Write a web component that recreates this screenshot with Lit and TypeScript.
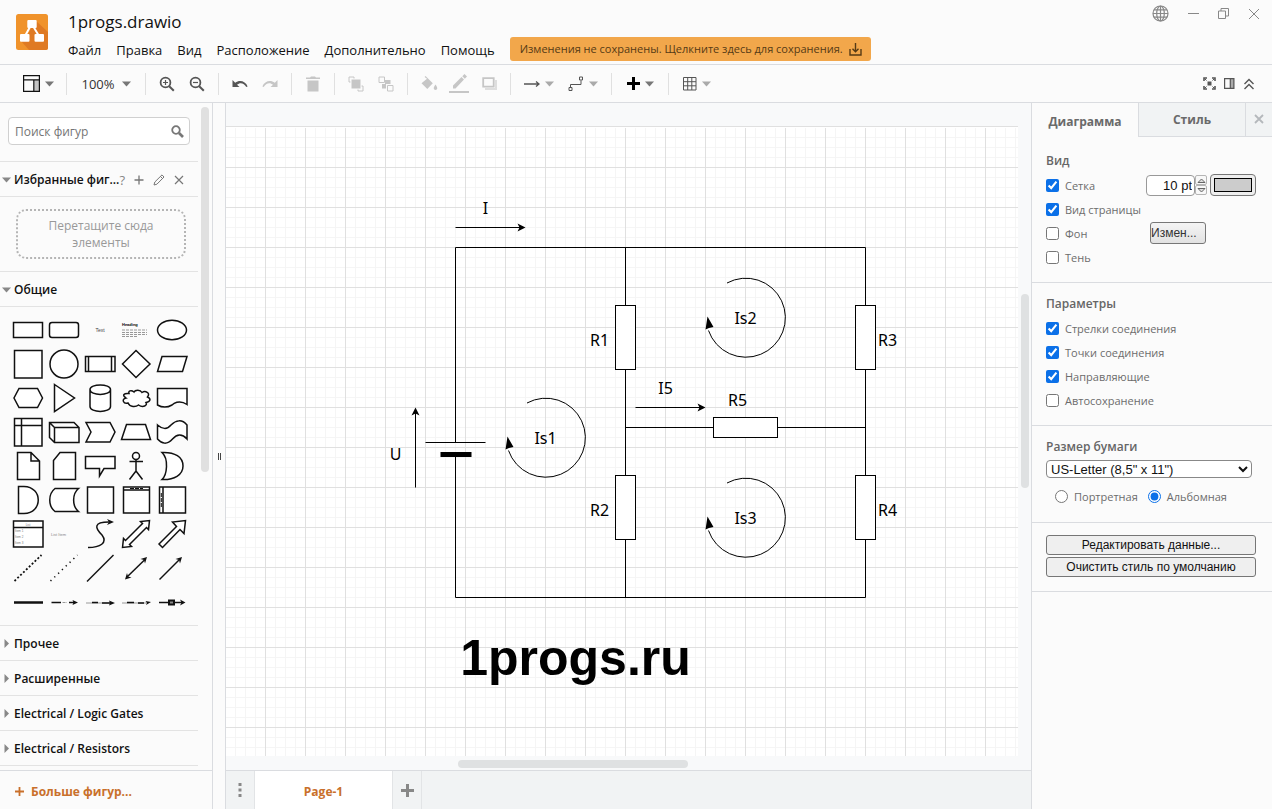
import { LitElement, html, css, svg } from "lit";
import { customElement, state } from "lit/decorators.js";
import { classMap } from "lit/directives/class-map.js";

const PALETTE = [
  svg`<rect x="3.5" y="9.5" width="29" height="15"/>`,
  svg`<rect x="3.5" y="9.5" width="29" height="15" rx="2.5"/>`,
  svg`<text x="18" y="19" class="tiny" text-anchor="middle">Text</text>`,
  svg`<text x="4" y="13" class="tiny heading">Heading</text><path class="faint" d="M4 17H29M4 19.500H29M4 21.500H29M4 23.500H19"/>`,
  svg`<ellipse cx="18" cy="17" rx="14.500" ry="9.800"/>`,

  svg`<rect x="4.500" y="3.500" width="27.500" height="27.500"/>`,
  svg`<circle cx="18" cy="17" r="14"/>`,
  svg`<rect x="3.500" y="9.500" width="29.500" height="15"/><path d="M6.500 9.500v15M29.500 9.500v15"/>`,
  svg`<path d="M18 3.500 32 17 18 30.500 4.500 17Z"/>`,
  svg`<path d="M8 9.500H33L28.500 24.500H3.500Z"/>`,

  svg`<path d="M9 7.500H27.500L32.500 17 27.500 26.500H9L4 17Z"/>`,
  svg`<path d="M8.500 3.500 28.500 17 8.500 30.500Z"/>`,
  svg`<path d="M8 8.500V25.500C8 32 28.500 32 28.500 25.500V8.500C28.500 2.500 8 2.500 8 8.500C8 15 28.500 15 28.500 8.500"/>`,
  svg`<path d="M11 12.500C6 12 3.500 14 8 17C3 18 5.500 23.500 10 22C12 26.500 18 26 20.500 24C25 27 30 24.500 28 21.500C33 20.500 33 17.500 29.500 16C33 11.500 27 9.500 24 11.500C22 8 17 9 16 11C13 8.500 10 10 11 12.500Z"/>`,
  svg`<path d="M3.500 7.500H33V23.500C25 18 19 23 18 24C12 27.500 7 26 3.500 24Z"/>`,

  svg`<path d="M4.500 3.500H32V31H4.500ZM4.500 10.500H32M11.500 3.500V31"/>`,
  svg`<path d="M3.500 7.500H28L33 12.500V27.500H8.500L3.500 22.500ZM3.500 7.500 8.500 12.500H33M8.500 12.500V27.500"/>`,
  svg`<path d="M4 7.500H28L33 17 28 27H4L9 17Z"/>`,
  svg`<path d="M8.500 9.500H27.500L32.500 24.500H3.500Z"/>`,
  svg`<path d="M3.500 10C8 14 13 15 17 10C22 5 28 4 33 10V24C28 18.500 23 19 18.500 24C13 30 8 29 3.500 24Z"/>`,

  svg`<path d="M7.500 3.500H21L29.500 12V30.500H7.500ZM21 3.500V12H29.500"/>`,
  svg`<path d="M14 3.500H29.500V30.500H7.500V11.500Z"/>`,
  svg`<path d="M3.500 7.500H33V19.500H22L17.500 27V19.500H3.500Z"/>`,
  svg`<circle cx="18" cy="7" r="3.500"/><path d="M18 10.500V22M11.500 12.500H25M18 22 11.500 30.500M18 22 24.500 30.500"/>`,
  svg`<path d="M8 3.500C21 3 29 8 29 17C29 26 20 31 8 30.500C13 26 15 10 8 3.500Z"/>`,

  svg`<path d="M8.500 3.500H14C33 4 33 30 14 30.500H8.500Z"/>`,
  svg`<path d="M9 5.500H32.500C26 11 26 23 32.500 28.500H9C2 23 2 11 9 5.500Z"/>`,
  svg`<rect x="5.500" y="4" width="26" height="26"/>`,
  svg`<path d="M5.500 4H31.500V30H5.500ZM5.500 7H31.500"/><path class="dash" d="M12 5.500H25"/>`,
  svg`<path d="M5.500 4H31.500V30H5.500ZM9 4V30"/><path class="dash" d="M7.300 10V24"/>`,

  svg`<path d="M3.500 4H33V30H3.500ZM3.500 10.500H33"/><text class="micro" x="18" y="9" text-anchor="middle">List</text><text class="micro" x="5" y="15">Item 1</text><text class="micro" x="5" y="21">Item 2</text><text class="micro" x="5" y="27">Item 3</text>`,
  svg`<text class="micro soft" x="5" y="18.500">List Item</text>`,
  svg`<path class="open" d="M6 30.500C18 30.500 26 26 20 18C13 11 11 5 27 5"/><path class="solid" d="M32 5 25 2 27 5 25 8Z"/>`,
  svg`<path d="M4.500 30.500 5.500 21.500 7.500 23.500 24.500 6.500 22.500 4.500 31.500 3.500 30.500 12.500 28.500 10.500 11.500 27.500 13.500 29.500Z"/>`,
  svg`<path d="M5 27 22.500 9.500 18.500 5 31.500 3.500 30 16.500 26 12.500 8.500 30.500Z"/>`,

  svg`<path class="dotted" d="M4.500 30 31.500 4"/>`,
  svg`<path class="sparse" d="M4.500 30 31.500 4"/>`,
  svg`<path d="M5 30.500 31.500 4"/>`,
  svg`<path d="M9 26 27 8.500"/><path class="solid" d="M7 28.500 9 22 10 25.500 13.500 26.500ZM29 6 27 12.500 26 9 22.500 8Z"/>`,
  svg`<path d="M5.500 28.500 25 9"/><path class="solid" d="M28 6 26 12.500 25 9 21.500 8Z"/>`,

  svg`<path class="heavy" d="M4 17.500H33"/>`,
  svg`<path d="M5.500 17.500H15M23 17.500H28"/><path class="faint" d="M16.500 17.500H21"/><path class="solid" d="M32 17.500 26.500 15 27.500 17.500 26.500 20Z"/>`,
  svg`<path class="faint even" d="M4 18H28"/><path d="M10 17.500H16M20 18H28"/><path class="solid" d="M33 18 27 15.500 28 18 27 20.500Z"/>`,
  svg`<path class="faint even" d="M4 18H30"/><path d="M9 17.500H16M20 18H26"/><path class="solid" d="M33 17 27.500 16 29 18 28 20Z"/>`,
  svg`<path d="M5 17.500H28"/><rect class="heavybox" x="15" y="15.500" width="5" height="4"/><path class="solid" d="M31.500 17.500 26 14.500 27.500 17.500 26 20.500Z"/>`,
];

const icon = (w: number, h: number, body: unknown, cls = "") => html`<svg
  class="icon ${cls}" width=${w} height=${h} viewBox="0 0 ${w} ${h}" aria-hidden="true">${body}</svg>`;
const caret = (cls = "") => icon(9, 6, svg`<path d="M0 0.500H9L4.500 5.500Z"/>`, "fill " + cls);

const I = {
  layout: icon(17, 17, svg`<path fill="#c4c4c4" stroke="none" d="M11 5h5v11h-5z"/><path stroke="#111" stroke-width="1.200" d="M.6.6h15.800v15.800H.6zM.6 4.800h15.800M10.800 4.800v11.600"/>`),
  zoomIn: icon(16, 16, svg`<circle cx="6.500" cy="6.500" r="4.900" stroke-width="1.800"/><path stroke-width="2" d="M10.200 10.200 14.800 14.800"/><path stroke-width="1.200" d="M4 6.500h5M6.500 4v5"/>`),
  zoomOut: icon(16, 16, svg`<circle cx="6.500" cy="6.500" r="4.900" stroke-width="1.800"/><path stroke-width="2" d="M10.200 10.200 14.800 14.800"/><path stroke-width="1.200" d="M4 6.500h5"/>`),
  undo: icon(16, 10, svg`<path d="M.5 1v7h7L5 5.700C8 3 12 3.800 14.300 8l1.300-.5C13.500 2 7.500.5 3.200 3.800Z"/>`, "fill"),
  redo: icon(16, 10, svg`<path d="M15.500 1v7h-7L11 5.700C8 3 4 3.800 1.700 8L.4 7.500C2.500 2 8.500.5 12.800 3.800Z"/>`, "fill"),
  trash: icon(14, 16, svg`<path d="M0 1.500h4L5 .5h4l1 1h4V3H0zM1.500 4.500h11v11h-11z"/>`, "fill"),
  front: icon(16, 16, svg`<path fill="currentColor" stroke="none" d="M3.500 3.500h9v9h-9z"/><path d="M2.500 6H1V1h5v1.500M13.500 10H15v5h-5v-1.500"/>`),
  back: icon(16, 16, svg`<path fill="currentColor" stroke="none" d="M7 4h5.500v4H8v4.500H4V8h3z"/><path d="M1 1h5.500v5.500H1zM9.500 9.500H15V15H9.500z"/>`),
  fill: icon(17, 15, svg`<path d="M4.500 0 11.800 7.300 6.300 13 .5 7.200 6 2.800 3.600.9zM14.500 8.500c3 4 1.500 5.500 0 5.500s-3-1.500 0-5.500z"/>`, "fill"),
  line: icon(20, 19, svg`<path d="M0 17h20v2H0zM4 14.500v-3L12.500 3 15 5.500 6.500 14.500zM13.300 2.200 15.500 0 18 2.500 15.800 4.700z"/>`, "fill"),
  shadow: icon(15, 13, svg`<path stroke-width="1.800" d="M1.200 1.200h10.500v8.500H1.200z"/><path stroke-width="2" stroke="#dedede" d="M3 12h11V3"/>`),
  arrow: icon(16, 8, svg`<path stroke-width="1.300" d="M0 4h15M12 1.500 15 4 12 6.500"/>`),
  way: icon(16, 16, svg`<path d="M2.500 11V8.500h10.500V4.500"/><path d="M1 11.500h3v3H1zM11.500 1h3v3h-3z"/>`),
  plus: icon(13, 13, svg`<path stroke="#000" stroke-width="3" d="M6.500 0v13M0 6.500h13"/>`),
  grid: icon(14, 14, svg`<path d="M.5.5h12.500v12.500H.5zM4.700.5V13M8.800.5V13M.5 4.700H13M.5 8.800H13"/>`),
  full: icon(13, 13, svg`<path stroke-width="1.600" d="M1 4V1h3M9 1h3v3M12 9v3H9M4 12H1V9"/><path stroke-width="4" d="M4.500 6.500h4"/><path d="M2 2l1.500 1.500M11 2 9.500 3.500M2 11l1.500-1.500M11 11 9.500 9.500"/>`),
  format: icon(11, 11, svg`<path fill="#aaa" stroke="none" d="M6.500.500h3.500v10H6.500z"/><path stroke-width="1.200" d="M.6.6h9.300v9.800H.6zM6.300.600v9.800"/>`),
  collapse: icon(12, 12, svg`<path stroke-width="1.400" d="M1.500 6 6 1.500 10.500 6M1.500 11 6 6.500 10.500 11"/>`),
  globe: icon(17, 17, svg`<g stroke-width="1.200"><circle cx="8.500" cy="8.500" r="7.500"/><ellipse cx="8.500" cy="8.500" rx="3.800" ry="7.500"/><path d="M8.500 1v15M1 8.500h15M2 4.800h13M2 12.200h13"/></g>`),
  min: icon(11, 11, svg`<path d="M0 5.500h11"/>`),
  restore: icon(11, 11, svg`<path d="M.5 3h7v7.500h-7zM3 3V.500h7.500V8H7.500"/>`),
  close: icon(12, 12, svg`<path d="M1 1 11 11M11 1 1 11"/>`),
  save: icon(13, 13, svg`<path stroke-width="1.400" d="M1 6v6h11V6M6.500 0v8.500M3.500 5.800l3 3 3-3"/>`),
  search: icon(13, 13, svg`<circle cx="5" cy="5" r="3.800" stroke-width="1.800"/><path stroke-width="2.600" d="M8 8 12 12"/>`),
  add: icon(10, 10, svg`<path stroke-width="1.300" d="M5 .5v9M.5 5h9"/>`),
  pencil: icon(12, 12, svg`<path d="M1 11l.8-3L9 .900 11 3 3.900 10.200zM7.500 2.500l2 2"/>`),
  cross: icon(10, 10, svg`<path stroke-width="1.200" d="M1 1 9 9M9 1 1 9"/>`),
  shut: icon(10, 10, svg`<path stroke-width="1.800" d="M1 1 9 9M9 1 1 9"/>`),
  dots: icon(4, 14, svg`<path d="M.5 0h3v3h-3zM.5 5.500h3v3h-3zM.5 11h3v3h-3z"/>`, "fill"),
  addPage: icon(13, 13, svg`<path stroke-width="3" d="M6.500 0v13M0 6.500h13"/>`),
};

const LOGO = html`<svg class="logo" width="32" height="36" viewBox="0 0 32 36" role="img" aria-label="draw.io">
  <rect width="32" height="36" rx="2.500" fill="#f0932b"/>
  <path fill="#df7a23" d="M20 7 32 18V33.500Q32 36 29.500 36H13L5 27 12 20 15 14Z"/>
  <path stroke="#fff" stroke-width="2" d="M14.500 12 9 22M17 12 23 22"/>
  <rect x="11.300" y="6" width="9.400" height="8" rx="1" fill="#fff"/>
  <rect x="4" y="20" width="9.500" height="7.800" rx="1" fill="#fff"/>
  <rect x="18.500" y="20" width="9.500" height="7.800" rx="1" fill="#fff"/>
</svg>`;

const loop = (x: number, y: number, label: string) => svg`<g transform="translate(${x} ${y})">
  <path class="wire" d="M-18.500-34.500A39.500 39.500 0 1 1-37 13"/>
  <path d="M-38-1-40 12-36.500 10.500-32 9.500Z"/>
  <text x="0" y="6" text-anchor="middle">${label}</text></g>`;
const arrowRight = (x: number, y: number) => svg`<path class="wire" d="M${x} ${y}h66"/>
  <path d="M${x + 70} ${y}l-8-4 2 4-2 4z"/>`;
const resistor = (x: number, y: number, w: number, h: number) =>
  svg`<rect class="part" x=${x} y=${y} width=${w} height=${h}/>`;

@customElement("drawing-canvas")
export class DrawingCanvas extends LitElement {
  static styles = css`
    :host { display: grid; grid-template-columns: minmax(0, 1fr) 13px; grid-template-rows: minmax(0, 1fr) 14px; background: #f8f9fa; min-width: 0; min-height: 0; padding-top: 23px; border-left: 1px solid #dadce0; }
    .sheet { display: block; width: 100%; height: 100%; background: #fff; font: 16px "Noto Sans", sans-serif; overflow: hidden; }
    .wire { fill: none; stroke: #000; stroke-width: 1; }
    .part { fill: #fff; stroke: #000; }
    .plate { stroke-width: 5; }
    .minor { fill: none; stroke: #f5f5f5; }
    .major { fill: none; stroke: #e0e0e0; }
    .mark { font: bold 50px "Liberation Sans", sans-serif; }
    .vbar { display: flex; flex-direction: column; align-items: center; padding-top: 168px; }
    .hbar { display: flex; align-items: center; padding: 2px 0 0 232px; }
    .thumb { background: #dfe1e2; border-radius: 4px; }
    .vbar .thumb { width: 8px; height: 42%; }
    .hbar .thumb { height: 8px; width: 41%; }
  `;
  render() {
    return html`
      <svg class="sheet" role="img" aria-label="Электрическая схема">
        <defs>
          <pattern id="grid" width="40" height="40" patternUnits="userSpaceOnUse">
            <path class="minor" d="M10.500 0V40M20.500 0V40M30.500 0V40M0 10.500H40M0 20.500H40M0 30.500H40"/>
            <path class="major" d="M.5 0V40M0 .5H40"/>
          </pattern>
        </defs>
        <g transform="translate(-1 0)">
        <rect y="1" width="110%" height="100%" fill="url(#grid)" transform="translate(0 1)"/>
        <path class="major" d="M0 .5H2000"/>
        <g transform="translate(.5 1.500)">
          <path class="wire" d="M230 315V120H640V470H230V327M400 120V470M400 300H640M200 315H260"/>
          <path class="wire plate" d="M215 327H246"/>
          ${resistor(390, 178, 20, 64)}${resistor(390, 348, 20, 64)}
          ${resistor(630, 178, 20, 64)}${resistor(630, 348, 20, 64)}
          ${resistor(488, 290, 64, 20)}
          ${arrowRight(230, 100)}${arrowRight(410, 280)}
          <path class="wire" d="M190 360V284"/><path d="M190 280l-4 8 4-2 4 2z"/>
          ${loop(320, 310, "Is1")}${loop(520, 190, "Is2")}${loop(520, 390, "Is3")}
          <text x="260" y="86" text-anchor="middle">I</text>
          <text x="440" y="266" text-anchor="middle">I5</text>
          <text x="170" y="332" text-anchor="middle">U</text>
          <text x="374" y="218" text-anchor="middle">R1</text>
          <text x="374" y="388" text-anchor="middle">R2</text>
          <text x="662" y="218" text-anchor="middle">R3</text>
          <text x="662" y="388" text-anchor="middle">R4</text>
          <text x="512" y="278" text-anchor="middle">R5</text>
          <text class="mark" x="350" y="547" text-anchor="middle">1progs.ru</text>
        </g>
        </g>
      </svg>
      <div class="vbar"><div class="thumb"></div></div>
      <div class="hbar"><div class="thumb"></div></div>`;
  }
}

@customElement("shape-sidebar")
export class ShapeSidebar extends LitElement {
  static styles = css`
    :host { display: flex; flex-direction: column; min-height: 0; border-right: 1px solid #dadce0; font: 500 13px/18px "Open Sans", sans-serif; color: #111; }
    button { font: inherit; color: inherit; background: none; border: 0; padding: 0; margin: 0; }
    .icon { display: block; flex: none; fill: none; stroke: currentColor; }
    .fill { fill: currentColor; stroke: none; }
    .scroll { display: flex; flex: 1; min-height: 0; overflow: hidden; }
    .list { width: 198px; }
    .track { flex: 1; padding: 4px 3px 0; }
    .thumb { background: #e0e0e0; border-radius: 4px; height: 55%; }
    .find { display: flex; align-items: center; margin: 14px 8px 16px; height: 26px; border: 1px solid #d0d0d0; border-radius: 4px; background: #fff; padding-right: 5px; color: #777; }
    .find input { flex: 1; min-width: 0; border: 0; background: none; outline: none; padding: 0 6px; font: 12px "Open Sans", sans-serif; color: #333; }
    .find input::placeholder { color: #757575; }
    .head { display: flex; align-items: center; border-top: 1px solid #e3e3e3; height: 34px; }
    .open .head { border-bottom: 1px solid #e3e3e3; }
    .list section:last-child { border-bottom: 1px solid #e3e3e3; }
    .title { display: flex; align-items: center; gap: 2px; font-size: 12px; font-weight: 600; white-space: nowrap; padding-top: 1px; }
    .mark { width: 12px; display: flex; justify-content: center; color: #888; }
    .tools { display: flex; align-items: center; gap: 9px; color: #777; padding-top: 1px; }
    .help { color: #888; }
    .drop { margin: 12px 12px 12px 16px; border: 2px dotted #b5b5b5; border-radius: 10px; padding: 6px 24px; text-align: center; font-size: 12px; line-height: 17px; font-weight: 400; color: #999; }
    .shapes { display: grid; grid-template-columns: repeat(5, 36px); padding: 6px 8px 6px 10px; }
    .shapes svg { display: block; fill: #fff; stroke: #111; stroke-width: 1.5; overflow: visible; }
    .shapes .tiny { font: 5px "Liberation Sans", sans-serif; fill: #444; stroke: none; }
    .shapes .heading { font-size: 4px; font-weight: bold; fill: #000; }
    .shapes .micro { font: 3px "Liberation Sans", sans-serif; fill: #777; stroke: none; }
    .shapes .soft { font-size: 4px; fill: #888; }
    .faint { stroke: #999; stroke-width: 1; stroke-dasharray: 3 1; }
    .even { stroke-dasharray: none; }
    .dash { stroke-width: 1; stroke-dasharray: 4 1; }
    .shapes .open { fill: none; }
    .solid { fill: #111; stroke: none; }
    .dotted { stroke-width: 1.8; stroke-dasharray: 2 2; }
    .sparse { stroke-width: 1.5; stroke-dasharray: 1.3 4; }
    .heavy { stroke-width: 2.5; }
    .heavybox { stroke-width: 2; fill: #888; }
    .more { height: 39px; border-top: 1px solid #dadce0; color: #c9702b; font-size: 12px; font-weight: 700; display: flex; align-items: center; gap: 7px; padding: 3px 15px 0; }
  `;
  render() {
    const section = (t: string) => html`<section><div class="head">
      <button class="title"><span class="mark">${icon(5, 9, svg`<path d="M.5 0V9L5 4.500Z"/>`, "fill")}</span>${t}</button></div></section>`;
    return html`
      <div class="scroll">
        <div class="list">
          <div class="find"><input type="text" aria-label="Поиск фигур" placeholder="Поиск фигур">${I.search}</div>
          <section class="open">
            <div class="head">
              <button class="title"><span class="mark">${caret()}</span>Избранные фиг...</button>
              <div class="tools"><button class="help" aria-label="Справка">?</button><button aria-label="Добавить">${I.add}</button>
              <button aria-label="Изменить">${I.pencil}</button><button aria-label="Закрыть">${I.cross}</button></div>
            </div>
            <div class="drop">Перетащите сюда элементы</div>
          </section>
          <section class="open">
            <div class="head"><button class="title"><span class="mark">${caret()}</span>Общие</button></div>
            <div class="shapes">${PALETTE.map((s) => html`<button tabindex="-1"><svg width="36" height="34" viewBox="0 0 36 34">${s}</svg></button>`)}</div>
          </section>
          ${["Прочее", "Расширенные", "Electrical / Logic Gates", "Electrical / Resistors"].map(section)}
        </div>
        <div class="track"><div class="thumb"></div></div>
      </div>
      <button class="more">${icon(9, 9, svg`<path stroke-width="1.800" d="M4.500 0v9M0 4.500h9"/>`)}Больше фигур...</button>`;
  }
}

@customElement("format-panel")
export class FormatPanel extends LitElement {
  @state() private portrait = false;
  static styles = css`
    :host { display: block; border-left: 1px solid #dadce0; font: 11px/18px "Open Sans", sans-serif; color: #6c6c6c; background: #fbfbfb; }
    button { font: inherit; color: inherit; margin: 0; padding: 0; }
    .icon { display: block; fill: none; stroke: currentColor; }
    .fill { fill: currentColor; stroke: none; }
    .tabs { display: grid; grid-template-columns: 106px 1fr 27px; height: 34px; }
    .tabs button { border: 1px solid #dadce0; border-width: 0 0 1px 1px; background: #f1f3f4; font-weight: 700; font-size: 12px; color: #6a6a6a; display: flex; align-items: center; justify-content: center; }
    .tabs .active { background: none; border: 0; padding-top: 3px; }
    .tabs .shut { color: #b4b8bc; padding-bottom: 2px; }
    .group { border-bottom: 1px solid #dadce0; padding: 15px 15px 13px 14px; }
    h2 { margin: 0 0 3px; font-size: 12px; line-height: 18px; font-weight: 600; color: #666; }
    .row { display: grid; grid-template-columns: 100px 1fr; align-items: center; height: 24px; }
    label { display: flex; align-items: center; gap: 6px; white-space: nowrap; }
    input[type="checkbox"], input[type="radio"] { width: 13px; height: 13px; margin: 0; flex: none; accent-color: #0b70e8; }
    label span { padding-top: 2px; }
    .size { display: flex; align-items: center; }
    .size input { width: 49px; height: 21px; box-sizing: border-box; border: 1px solid #999; border-radius: 4px; text-align: right; padding: 0 2px; font: 13px "Liberation Sans", sans-serif; color: #111; background: #fff; }
    .spin { display: grid; width: 12px; height: 20px; margin-right: 3px; }
    .spin button { background: #f8f8f8; border: 1px solid #b5b5b5; border-radius: 2px; display: grid; place-items: center; }
    .swatch { width: 46px; height: 22px; box-sizing: border-box; border: 1px solid #777; border-radius: 4px; background: #eee; padding: 3px; display: grid; }
    .swatch i { border: 1px solid #000; background: #ccc; }
    .change { justify-self: start; width: 56px; height: 22px; margin-left: 4px; border: 1px solid #777; border-radius: 3px; background: linear-gradient(#f4f4f4, #e2e2e2); font: 12px "Liberation Sans", sans-serif; color: #333; text-align: left; overflow: hidden; }
    select { display: block; width: 206px; height: 18px; border: 1px solid #888; border-radius: 4px; background: #fff; color: #111; font: 13px "Liberation Sans", sans-serif; padding: 0; }
    .radios { display: flex; gap: 10px; padding: 8px 9px 1px; }
    .paper { padding-top: 12px; padding-bottom: 15px; }
    .paper h2 { margin-bottom: 4px; }
    .actions { display: grid; gap: 2px; padding: 12px 16px 14px 14px; }
    .actions button { height: 20px; border: 1px solid #767676; border-radius: 3px; background: #efefef; color: #111; font: 12px "Liberation Sans", sans-serif; }
    .params { padding-top: 12px; }
  `;
  render() {
    const check = (t: string, on: boolean) => html`<label><input type="checkbox" .checked=${on}><span>${t}</span></label>`;
    const tri = (d: string) => icon(9, 5, svg`<path stroke="#666" fill="#ddd" d=${d}/>`);
    return html`
      <div class="tabs"><button class="active">Диаграмма</button><button>Стиль</button><button class="shut" aria-label="Закрыть">${I.shut}</button></div>
      <div class="group"><h2>Вид</h2>
        <div class="row">${check("Сетка", true)}
          <div class="size"><input type="text" value="10 pt" aria-label="Размер сетки">
            <span class="spin"><button aria-label="Больше">${tri("M1 4.500 4.500 1 8 4.500Z")}</button><button aria-label="Меньше">${tri("M1 .5 4.500 4 8 .5Z")}</button></span>
            <button class="swatch" aria-label="Цвет сетки"><i></i></button></div></div>
        <div class="row">${check("Вид страницы", true)}</div>
        <div class="row">${check("Фон", false)}<button class="change">Измен...</button></div>
        <div class="row">${check("Тень", false)}</div>
      </div>
      <div class="group params"><h2>Параметры</h2>
        <div class="row">${check("Стрелки соединения", true)}</div>
        <div class="row">${check("Точки соединения", true)}</div>
        <div class="row">${check("Направляющие", true)}</div>
        <div class="row">${check("Автосохранение", false)}</div>
      </div>
      <div class="group paper"><h2 id="paper">Размер бумаги</h2>
        <select aria-labelledby="paper"><option>US-Letter (8,5" x 11")</option><option>A4 (210 mm x 297 mm)</option></select>
        <div class="radios">
          <label><input type="radio" name="o" .checked=${this.portrait} @change=${() => (this.portrait = true)}><span>Портретная</span></label>
          <label><input type="radio" name="o" .checked=${!this.portrait} @change=${() => (this.portrait = false)}><span>Альбомная</span></label>
        </div>
      </div>
      <div class="group actions"><button>Редактировать данные...</button><button>Очистить стиль по умолчанию</button></div>`;
  }
}

@customElement("app-root")
export class AppRoot extends LitElement {
  static styles = css`
    :host { display: grid; grid-template-rows: auto auto minmax(0, 1fr); height: 100vh; background: #fbfbfb; font: 13px/18px "Open Sans", sans-serif; color: #111; overflow: hidden; }
    button { font: inherit; color: inherit; background: none; border: 0; padding: 0; margin: 0; }
    .icon { display: block; flex: none; fill: none; stroke: currentColor; }
    .fill { fill: currentColor; stroke: none; }
    header { display: flex; height: 64px; border-bottom: 1px solid #dadce0; padding: 0 12px 0 16px; }
    .logo { margin-top: 14px; fill: none; }
    .heads { flex: 1; padding: 11px 0 0 20px; }
    h1 { margin: 0; font-size: 17px; line-height: 22px; font-weight: 400; }
    .menu { display: flex; align-items: center; gap: 15px; margin-top: 4px; height: 24px; }
    .menu a { color: inherit; text-decoration: none; white-space: nowrap; padding-top: 2px; }
    .status { display: flex; align-items: center; gap: 6px; height: 24px; padding: 0 9px 0 10px; border-radius: 3px; background: #f2a74b; color: #553a15; font-size: 11px; white-space: nowrap; }
    .win { display: flex; gap: 19px; height: 27px; align-items: center; color: #888; }
    .bar { display: flex; align-items: center; height: 37px; border-bottom: 1px solid #dadce0; padding: 0 13px 0 16px; color: #555; }
    .bar button { width: 30px; height: 30px; display: flex; align-items: center; justify-content: center; }
    .bar .dd { width: 44px; gap: 5px; }
    .bar .zoom { width: 66px; gap: 7px; color: #333; font-size: 13px; }
    .bar .off { color: #c6c6c6; }
    .soft { color: #aaa; }
    .mid { color: #777; }
    .sep { width: 1px; height: 22px; background: #e0e0e0; margin: 0 6px; }
    .grow { flex: 1; }
    .bar .small { width: 20px; }
    main { display: grid; grid-template-columns: 213px 12px minmax(0, 1fr) 241px; min-height: 0; }
    .split { display: flex; align-items: center; justify-content: center; gap: 1px; }
    .split i { width: 1px; height: 7px; background: #444; }
    .work { display: grid; grid-template-rows: minmax(0, 1fr) 39px; min-width: 0; min-height: 0; }
    .pages { display: flex; background: #f1f3f4; border-top: 1px solid #dadce0; border-left: 1px solid #dadce0; color: #888; }
    .pages button { width: 29px; display: flex; align-items: center; justify-content: center; border-right: 1px solid #e2e4e6; }
    .pages .page { width: 138px; background: #fff; color: #c9702b; font-weight: 700; font-size: 12px; padding-top: 4px; }
  `;
  render() {
    const btn = (label: string, g: unknown, cls: Record<string, boolean> = {}, drop?: unknown) =>
      html`<button class=${classMap(cls)} aria-label=${label}>${g}${drop}</button>`;
    const sep = html`<span class="sep"></span>`;
    const dd = { dd: true }, off = { off: true };
    return html`
      <header>${LOGO}
        <div class="heads"><h1>1progs.drawio</h1>
          <nav class="menu">${["Файл", "Правка", "Вид", "Расположение", "Дополнительно", "Помощь"].map((t) => html`<a href="#">${t}</a>`)}
            <button class="status">Изменения не сохранены. Щелкните здесь для сохранения.${I.save}</button></nav>
        </div>
        <div class="win">${btn("Язык", I.globe)}${btn("Свернуть", I.min)}${btn("Развернуть", I.restore)}${btn("Закрыть", I.close)}</div>
      </header>
      <div class="bar" role="toolbar">
        ${btn("Вид", I.layout, dd, caret("mid"))}${sep}
        <button class="zoom">100%${caret("mid")}</button>${sep}
        ${btn("Увеличить", I.zoomIn)}${btn("Уменьшить", I.zoomOut)}${sep}
        ${btn("Отменить", I.undo)}${btn("Повторить", I.redo, off)}${sep}
        ${btn("Удалить", I.trash, off)}${sep}
        ${btn("На передний план", I.front, off)}${btn("На задний план", I.back, off)}${sep}
        ${btn("Заливка", I.fill, off)}${btn("Линия", I.line, off)}${btn("Тень", I.shadow, off)}${sep}
        ${btn("Соединение", I.arrow, dd, caret("soft"))}${btn("Точки", I.way, dd, caret("soft"))}${sep}
        ${btn("Вставить", I.plus, dd, caret("mid"))}${sep}
        ${btn("Таблица", I.grid, dd, caret("soft"))}
        <span class="grow"></span>
        ${btn("Полный экран", I.full, { small: true })}${btn("Формат", I.format, { small: true })}${btn("Свернуть", I.collapse, { small: true })}
      </div>
      <main>
        <shape-sidebar></shape-sidebar>
        <div class="split"><i></i><i></i></div>
        <div class="work">
          <drawing-canvas></drawing-canvas>
          <div class="pages"><button aria-label="Страницы">${I.dots}</button><button class="page">Page-1</button><button aria-label="Добавить страницу">${I.addPage}</button></div>
        </div>
        <format-panel></format-panel>
      </main>`;
  }
}
